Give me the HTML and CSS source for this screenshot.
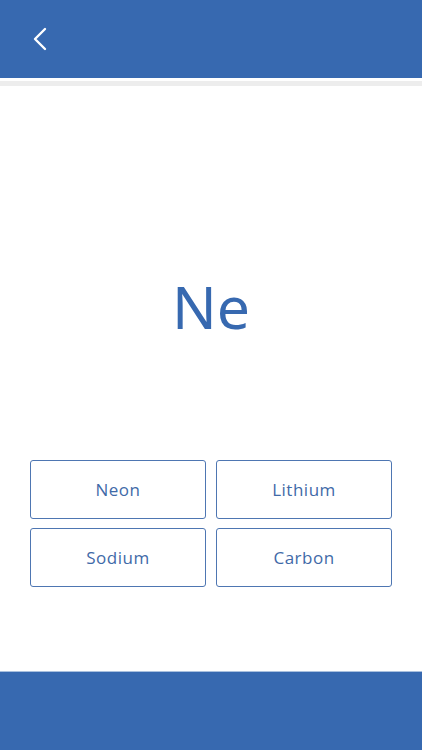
FILE: index.html
```html
<!DOCTYPE html>
<html lang="en">
<head>
    <meta charset="UTF-8">
    <meta name="viewport" content="width=device-width, initial-scale=1.0">
    <title>Element Quiz</title>
    <link rel="stylesheet" href="styles.css">
</head>
<body>
    <div class="app">
        <div class="top-bar">
            <button class="back-button" aria-label="Back">
                <svg width="14" height="24" viewBox="0 0 14 24">
                    <polyline points="12,2 2,12 12,22" fill="none" stroke="#fff" stroke-width="2.4" stroke-linecap="round" stroke-linejoin="round"/>
                </svg>
            </button>
        </div>
        <div class="top-shadow"></div>

        <div class="quiz">
            <div class="symbol">Ne</div>

            <div class="answers">
                <button class="answer">Neon</button>
                <button class="answer">Lithium</button>
                <button class="answer">Sodium</button>
                <button class="answer">Carbon</button>
            </div>
        </div>

        <div class="bottom-bar"></div>
    </div>
</body>
</html>
```

FILE: styles.css
```css
/* Quiz screen */
body {
    margin: 0;
    font-family: "Open Sans", "Noto Sans", sans-serif;
    background: white;
}

.app {
    display: flex;
    flex-direction: column;
    height: 750px;
}

.top-bar {
    height: 78px;
    background: #3769b0;
    display: flex;
    align-items: center;
    padding-left: 33px;
}

.back-button {
    background: none;
    border: none;
    padding: 0;
    width: 14px;
    height: 24px;
    cursor: pointer;
}

.top-shadow {
    height: 5px;
    margin-top: 3px;
    background: #ededed;
}

.quiz {
    flex: 1;
    display: flex;
    flex-direction: column;
    align-items: center;
}

.symbol {
    margin-top: 179px;
    font-family: "Noto Sans", sans-serif;
    font-size: 59px;
    line-height: 82px;
    color: #3769b0;
}

.answers {
    margin-top: 113px;
    display: grid;
    grid-template-columns: repeat(2, 176px);
    gap: 9px 10px;
}

.answer {
    height: 59px;
    background: white;
    border: 1px solid #4e76b2;
    border-radius: 3px;
    font-family: inherit;
    font-size: 17px;
    color: #3f6aa8;
    letter-spacing: 0.5px;
    cursor: pointer;
}

.bottom-bar {
    height: 78px;
    background: #3769b0;
    border-top: 1px solid #a9c0de;
}
```
